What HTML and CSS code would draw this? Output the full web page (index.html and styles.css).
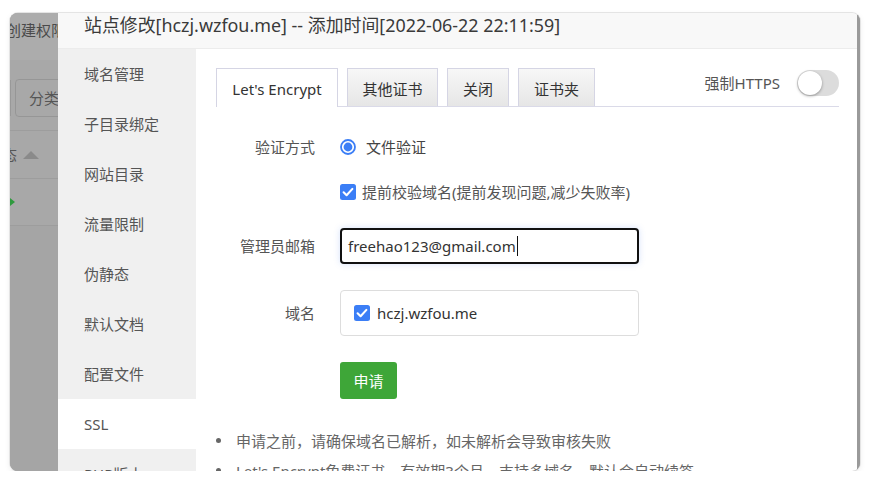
FILE: index.html
```html
<!DOCTYPE html>
<html lang="zh-CN">
<head>
<meta charset="utf-8">
<title>站点修改</title>
<link rel="stylesheet" href="styles.css">
</head>
<body>
<div class="frame">
  <div class="backdrop">
    <div class="bd-top"><span class="bd-title">创建权限</span></div>
    <div class="bd-filter"><span class="bd-edge"></span><span class="bd-select">分类</span></div>
    <div class="bd-head"><span class="bd-col">态</span><span class="bd-up"></span></div>
    <div class="bd-row"><span class="bd-play"></span></div>
    <div class="bd-rest"></div>
  </div>
  <div class="modal">
    <div class="modal-head">站点修改[hczj.wzfou.me] -- 添加时间[2022-06-22 22:11:59]</div>
    <div class="modal-body">
      <ul class="side">
        <li>域名管理</li>
        <li>子目录绑定</li>
        <li>网站目录</li>
        <li>流量限制</li>
        <li>伪静态</li>
        <li>默认文档</li>
        <li>配置文件</li>
        <li class="on">SSL</li>
        <li>PHP版本</li>
      </ul>
      <div class="content">
        <div class="tabs">
          <div class="tab on t1">Let's Encrypt</div>
          <div class="tab t2">其他证书</div>
          <div class="tab t3">关闭</div>
          <div class="tab t4">证书夹</div>
          <div class="force"><span>强制HTTPS</span><span class="switch"></span></div>
        </div>
        <div class="row r1">
          <span class="lbl">验证方式</span>
          <span class="radio"><svg width="16" height="16" viewBox="0 0 16 16"><circle cx="8" cy="8" r="7" fill="#fff" stroke="#3b7ef6" stroke-width="1.8"/><circle cx="8" cy="8" r="4.4" fill="#3b7ef6"/></svg></span>
          <span class="opt">文件验证</span>
        </div>
        <div class="row r2">
          <span class="check"><svg width="16" height="16" viewBox="0 0 16 16"><rect x="0" y="0" width="16" height="16" rx="2.5" fill="#3b7ef6"/><path d="M3.6 8.3 L6.6 11.2 L12.4 4.9" fill="none" stroke="#fff" stroke-width="2.1" stroke-linecap="round" stroke-linejoin="round"/></svg></span>
          <span class="check-text">提前校验域名(提前发现问题,减少失败率)</span>
        </div>
        <div class="row r3">
          <span class="lbl">管理员邮箱</span>
          <div class="input focus"><span>freehao123@gmail.com</span><span class="caret"></span></div>
        </div>
        <div class="row r4">
          <span class="lbl">域名</span>
          <div class="domains">
            <span class="check"><svg width="16" height="16" viewBox="0 0 16 16"><rect x="0" y="0" width="16" height="16" rx="2.5" fill="#3b7ef6"/><path d="M3.6 8.3 L6.6 11.2 L12.4 4.9" fill="none" stroke="#fff" stroke-width="2.1" stroke-linecap="round" stroke-linejoin="round"/></svg></span>
            <span class="dom">hczj.wzfou.me</span>
          </div>
        </div>
        <div class="row r5">
          <span class="lbl"></span>
          <button class="btn" type="button">申请</button>
        </div>
        <ul class="tips">
          <li>申请之前，请确保域名已解析，如未解析会导致审核失败</li>
          <li>Let's Encrypt免费证书，有效期3个月，支持多域名。默认会自动续签</li>
        </ul>
      </div>
    </div>
  </div>
  <div class="edge"></div>
</div>
</body>
</html>
```

FILE: styles.css
```css
* {
  box-sizing: border-box;
  margin: 0;
  padding: 0;
}

body {
  margin: 0;
  background: #fff;
  font-family: "Noto Sans", "Noto Sans CJK SC", sans-serif;
  font-size: 15px;
  color: #333;
}

.frame {
  margin: 13px 0 0 10px;
  width: 850px;
  height: 458px;
  border-radius: 8px;
  overflow: hidden;
  display: flex;
  background: #a3a3a3;
  box-shadow: 0 0 0 1px #e4e4e4, 0 2px 6px rgba(0, 0, 0, 0.08);
}

/* dimmed page behind the dialog */
.backdrop {
  width: 48px;
  flex: none;
  display: flex;
  flex-direction: column;
  overflow: hidden;
  background: #a8a8a8;
  white-space: nowrap;
}

.bd-top {
  height: 47px;
  background: #acacac;
  padding-top: 7px;
  line-height: 20px;
}

.bd-title {
  display: inline-block;
  margin-left: -4px;
  color: #4a4a4a;
  font-size: 15px;
}

.bd-filter {
  height: 71px;
  display: flex;
  align-items: flex-start;
  padding-top: 19px;
  border-bottom: 1px solid #9d9d9d;
}

.bd-edge {
  width: 2px;
  height: 36px;
  margin-top: 1px;
  border: 1px solid #999;
  border-left: 0;
  border-radius: 0 3px 3px 0;
}

.bd-select {
  margin-left: 4px;
  height: 38px;
  width: 60px;
  flex: none;
  border: 1px solid #969696;
  border-radius: 4px;
  padding-left: 13px;
  line-height: 36px;
  color: #555;
  font-size: 15px;
}

.bd-head {
  height: 48px;
  display: flex;
  align-items: center;
  border-bottom: 1px solid #9d9d9d;
}

.bd-col {
  margin-left: -8px;
  color: #555;
  font-size: 15px;
}

.bd-up {
  margin-left: 6px;
  width: 0;
  height: 0;
  border-left: 8px solid transparent;
  border-right: 8px solid transparent;
  border-bottom: 8px solid #8a8a8a;
}

.bd-row {
  height: 47px;
  display: flex;
  align-items: center;
  border-bottom: 1px solid #9d9d9d;
}

.bd-play {
  width: 0;
  height: 0;
  border-top: 4px solid transparent;
  border-bottom: 4px solid transparent;
  border-left: 5px solid #2f9a3e;
}

.bd-rest {
  flex: 1;
  background: #a5a5a5;
}

.edge {
  width: 3px;
  flex: none;
  background: #9a9a9a;
}

/* dialog */
.modal {
  width: 799px;
  flex: none;
  background: #fff;
  display: flex;
  flex-direction: column;
  overflow: hidden;
}

.modal-head {
  height: 36px;
  flex: none;
  background: #f8f8f8;
  border-bottom: 1px solid #ececec;
  padding-left: 26px;
  font-size: 17.9px;
  line-height: 24px;
  color: #3a3a3a;
  white-space: nowrap;
}

.modal-body {
  flex: 1;
  display: flex;
  min-height: 0;
}

.side {
  width: 138px;
  flex: none;
  list-style: none;
  background: #f0f0f0;
}

.side li {
  height: 50px;
  line-height: 50px;
  padding-left: 26px;
  color: #555;
  font-size: 15px;
}

.side li.on {
  background: #fff;
}

.content {
  flex: 1;
  padding: 19px 18px 0 20px;
  overflow: hidden;
}

.tabs {
  height: 39px;
  display: flex;
  align-items: flex-end;
  gap: 9px;
  border-bottom: 1px solid #dadae8;
}

.tab {
  height: 38px;
  border: 1px solid #d5d5e4;
  border-bottom: 0;
  background: linear-gradient(#f7f7f7, #e6e6e6);
  text-align: center;
  line-height: 36px;
  padding-top: 2px;
  font-size: 15px;
  color: #333;
  white-space: nowrap;
}

.tab.on {
  height: 39px;
  margin-bottom: -1px;
  background: #fff;
}

.t1 { width: 122px; }
.t2 { width: 91px; }
.t3 { width: 62px; }
.t4 { width: 77px; }

.force {
  margin-left: auto;
  align-self: flex-start;
  margin-top: 2px;
  display: flex;
  align-items: center;
  gap: 17px;
  font-size: 15px;
  color: #555;
  line-height: 26px;
}

.switch {
  position: relative;
  width: 42px;
  height: 26px;
  border-radius: 13px;
  background: #dcdcdc;
}

.switch::after {
  content: "";
  position: absolute;
  left: 1px;
  top: 1px;
  width: 24px;
  height: 24px;
  border-radius: 50%;
  background: #fff;
  box-shadow: 0 1px 3px rgba(0, 0, 0, 0.35);
}

/* form */
.row {
  display: flex;
  align-items: center;
}

.lbl {
  width: 99px;
  flex: none;
  margin-right: 25px;
  text-align: right;
  color: #555;
  font-size: 15px;
  line-height: 20px;
}

.r1 {
  margin-top: 25px;
  height: 30px;
}

.radio,
.check {
  width: 16px;
  height: 16px;
  flex: none;
  display: flex;
}

.opt {
  margin-left: 10px;
  color: #444;
  line-height: 20px;
}

.r2 {
  margin-top: 15px;
  height: 30px;
  padding-left: 124px;
}

.check-text {
  margin-left: 6px;
  color: #555;
  line-height: 20px;
  white-space: nowrap;
}

.r3 {
  margin-top: 21px;
}

.input {
  width: 299px;
  height: 36px;
  border: 2px solid #111;
  border-radius: 4px;
  padding-left: 6px;
  display: flex;
  align-items: center;
  color: #333;
  box-shadow: 0 0 6px rgba(90, 140, 240, 0.25);
}

.caret {
  width: 1px;
  height: 20px;
  background: #111;
  margin-left: 1px;
}

.r4 {
  margin-top: 26px;
}

.domains {
  width: 299px;
  height: 46px;
  border: 1px solid #ddd;
  border-radius: 4px;
  padding-left: 13px;
  display: flex;
  align-items: center;
}

.dom {
  margin-left: 7px;
  color: #333;
  line-height: 20px;
}

.r5 {
  margin-top: 26px;
}

.btn {
  width: 57px;
  height: 37px;
  border: 0;
  border-radius: 3px;
  background: #3ea638;
  color: #fff;
  font-family: inherit;
  font-size: 15px;
}

.tips {
  margin-top: 26px;
  list-style: none;
}

.tips li {
  display: flex;
  align-items: center;
  height: 30px;
  color: #666;
  font-size: 15px;
  white-space: nowrap;
}

.tips li::before {
  content: "";
  width: 5px;
  height: 5px;
  border-radius: 50%;
  background: #666;
  margin-right: 15px;
  flex: none;
}
```
